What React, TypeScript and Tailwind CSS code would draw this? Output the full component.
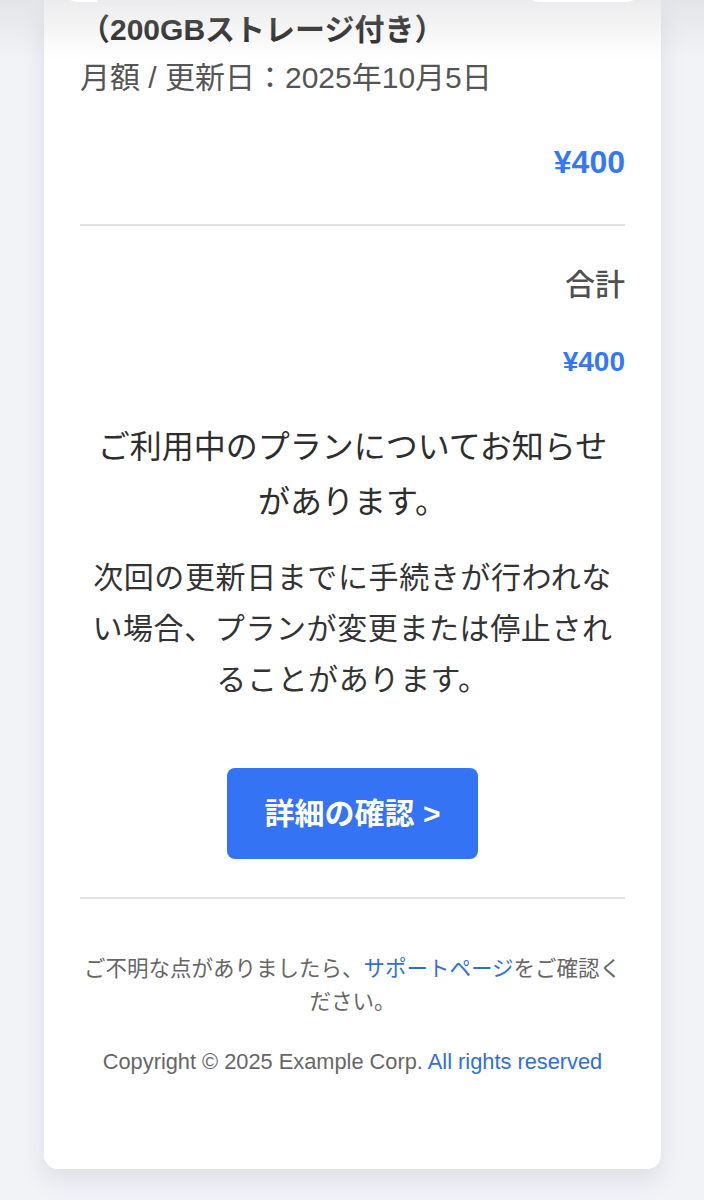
const font = "font-['Liberation_Sans','Noto_Sans_CJK_JP',sans-serif]";

function Divider({ className }: { className: string }) {
  return <div className={`border-t-2 border-[#e2e2e4] ${className}`} />;
}

export default function App() {
  return (
    <div className={`relative min-h-[1200px] overflow-hidden bg-[#f2f3f7] ${font}`}>
      <div className="mx-[44px] w-[617px] rounded-b-[14px] bg-white px-9 pt-3 pb-[91px] shadow-[0_10px_24px_rgba(30,40,60,0.10)]">
        <h2 className="text-[30px] leading-[36px] font-bold text-[#222]">（200GBストレージ付き）</h2>
        <p className="mt-3 text-[30px] leading-[36px] text-[#555]">月額 / 更新日：2025年10月5日</p>
        <p className="mt-12 text-right text-[32px] leading-[36px] font-bold text-[#3478f6]">¥400</p>

        <Divider className="mt-[44px]" />

        <p className="mt-[41px] text-right text-[30px] leading-[36px] font-medium text-[#505050]">合計</p>
        <p className="mt-[41px] text-right text-[28px] leading-[36px] font-bold text-[#3478f6]">¥400</p>

        <h1 className="mt-[40px] px-2 text-center text-[32px] leading-[55px] font-normal text-[#2e2e2e]">
          ご利用中のプランについてお知らせがあります。
        </h1>
        <p className="mt-[22px] text-center text-[30px] leading-[51px] tracking-[0.6px] text-[#333]">
          次回の更新日までに手続きが行われない場合、プランが変更または停止されることがあります。
        </p>

        <div className="mt-[63px] flex justify-center">
          <button
            type="button"
            className="flex h-[91px] w-[251px] items-center justify-center rounded-[8px] bg-[#3373f4] text-[30px] font-bold text-white"
          >
            詳細の確認 &gt;
          </button>
        </div>

        <Divider className="mt-[38px]" />

        <p className="mt-[54px] text-center text-[21.5px] leading-[33px] text-[#666]">
          ご不明な点がありましたら、<span className="text-[#2f6fdc]">サポートページ</span>をご確認ください。
        </p>
        <p className="mt-[27px] text-center text-[21.8px] leading-[32px] text-[#666]">
          Copyright © 2025 Example Corp. <span className="text-[#2f6fdc]">All rights reserved</span>
        </p>
      </div>

      {/* status overlay at the top of the phone screen */}
      <div className="pointer-events-none absolute inset-x-0 top-0 h-[60px] bg-gradient-to-b from-[rgba(200,200,205,0.35)] to-transparent" />
      <div className="pointer-events-none absolute top-[-40px] left-[58px] h-[42px] w-[130px] rounded-full bg-white/90" />
      <div className="pointer-events-none absolute top-[-30px] left-[92px] h-[36px] w-[94px] rounded-full bg-[#ececee]" />
      <div className="pointer-events-none absolute top-[-40px] left-[520px] h-[42px] w-[126px] rounded-full bg-white/90" />
    </div>
  );
}
